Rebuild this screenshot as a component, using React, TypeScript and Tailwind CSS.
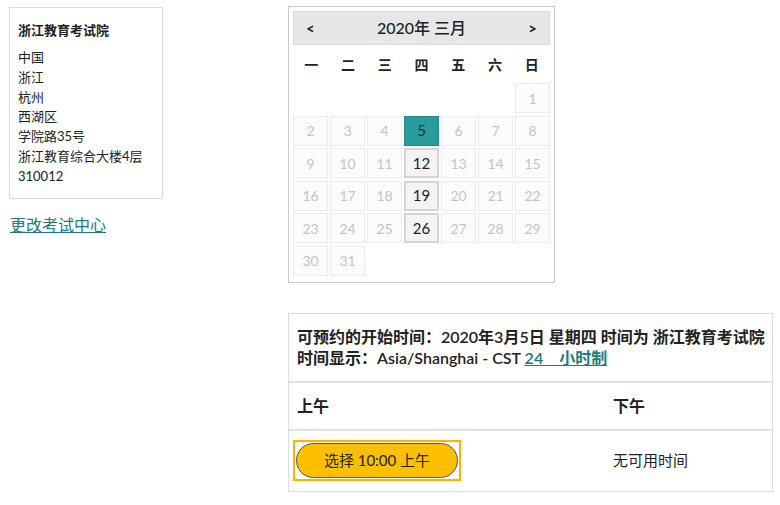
import React from 'react'

const font = "font-['Lato','Noto_Sans_CJK_SC',sans-serif]"

const weekdays = ['一', '二', '三', '四', '五', '六', '日']
const available = [12, 19, 26]
const selected = 5

const DayCell = ({ day }: { day: number | null }) => {
    if (day === null) return <div className="h-[30px]"></div>
    if (day === selected) {
        return (
            <div className="h-[30px] flex items-center justify-center bg-[#2a9c9e] border border-[#238587] text-[15px] text-[#1f2a2a]">
                {day}
            </div>
        )
    }
    if (available.includes(day)) {
        return (
            <div className="h-[30px] flex items-center justify-center bg-[#f4f4f4] border-2 border-[#d4d4d4] text-[15px] text-[#222]">
                {day}
            </div>
        )
    }
    return (
        <div className="h-[30px] flex items-center justify-center bg-[#fcfcfc] border border-[#ececec] text-[14px] text-[#c4c4c4]">
            {day}
        </div>
    )
}

const Calendar = () => {
    // 2020年3月1日是星期日
    const days: (number | null)[] = [null, null, null, null, null, null]
    for (let d = 1; d <= 31; d++) days.push(d)

    return (
        <div className="w-[267px] border border-[#cacaca] pt-[4px] px-[4px] pb-[6px] bg-white">
            <div className="h-[34px] flex items-center justify-between bg-[#e7e7e7] border border-[#dcdcdc] px-[12px]">
                <span className="text-[15px] font-bold text-[#222]">&lt;</span>
                <span className="text-[16px] font-medium text-[#222]">2020年 三月</span>
                <span className="text-[15px] font-bold text-[#222]">&gt;</span>
            </div>
            <div className="grid grid-cols-7 h-[38px] items-center">
                {weekdays.map((w) => (
                    <div key={w} className="text-center text-[14px] font-bold text-[#222]">{w}</div>
                ))}
            </div>
            <div className="grid grid-cols-7 gap-x-[2px] gap-y-[2.5px]">
                {days.map((d, i) => (
                    <DayCell key={i} day={d} />
                ))}
            </div>
        </div>
    )
}

const App = () => {
    return (
        <div className={`${font} w-[780px] h-[505px] bg-white text-[#222] flex`}>
            <div className="ml-[9px] mt-[7px] w-[154px] flex flex-col">
                <div className="border border-[#dddddd] pl-[8px] pt-[12px] pb-[11px]">
                    <div className="text-[13px] font-bold leading-[20px]">浙江教育考试院</div>
                    <div className="mt-[8px] text-[13px] leading-[19.8px]">
                        <div>中国</div>
                        <div>浙江</div>
                        <div>杭州</div>
                        <div>西湖区</div>
                        <div>学院路35号</div>
                        <div>浙江教育综合大楼4层</div>
                        <div>310012</div>
                    </div>
                </div>
                <a href="#" className="mt-[16px] ml-[1px] text-[16px] leading-[20px] text-[#217b7d] underline">更改考试中心</a>
            </div>

            <div className="ml-[125px] mt-[6px] flex flex-col">
                <Calendar />
                <div className="mt-[30px] w-[485px] border border-[#dddddd]">
                    <div className="border-b-2 border-[#e2e2e2] pl-[8px] pt-[12px] pb-[13px] text-[16px] font-semibold leading-[21px] whitespace-nowrap">
                        <div>可预约的开始时间：2020年3月5日 星期四 时间为 浙江教育考试院</div>
                        <div>
                            时间显示：Asia/Shanghai - CST{' '}
                            <a href="#" className="text-[#217b7d] underline">24　小时制</a>
                        </div>
                    </div>
                    <div className="flex h-[48px] items-center border-b-2 border-[#e2e2e2] text-[16px] font-semibold">
                        <div className="w-[316px] pl-[8px]">上午</div>
                        <div className="pl-[8px]">下午</div>
                    </div>
                    <div className="flex h-[60px] items-center text-[15px]">
                        <div className="w-[316px] pl-[4px]">
                            <div className="inline-flex border-2 border-[#fbb400] p-[1px] bg-white">
                                <button className="w-[162px] h-[35px] rounded-full bg-[#fdbf00] border border-[#555] text-[15px] text-[#222]">
                                    选择 10:00 上午
                                </button>
                            </div>
                        </div>
                        <div className="pl-[8px]">无可用时间</div>
                    </div>
                </div>
            </div>
        </div>
    )
}

export default App
